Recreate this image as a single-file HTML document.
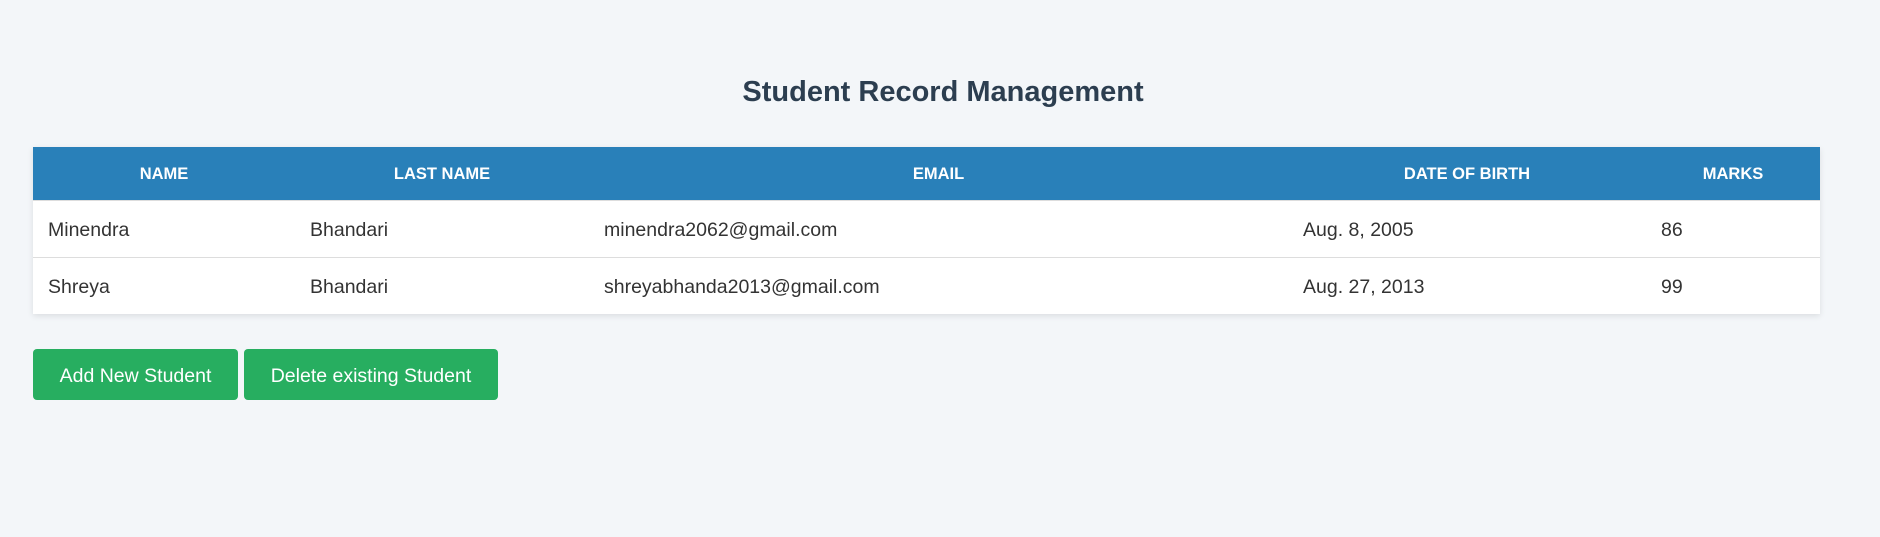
<!DOCTYPE html>
<html><head><meta charset="utf-8"><style>
body{margin:0;background:#f3f6f9;font-family:"Liberation Sans",sans-serif;width:1880px;height:537px;overflow:hidden;color:#333}
h1{position:absolute;top:76px;left:0;width:1886px;margin:0;text-align:center;font-size:29px;color:#2c3e50;font-weight:bold}
table{position:absolute;left:33px;top:147px;width:1787px;border-collapse:collapse;background:#fff;box-shadow:0 2px 6px rgba(0,0,0,.1);font-size:19.5px;table-layout:fixed}
th{background:#2980b9;color:#fff;height:53px;font-size:16.5px;font-weight:bold;text-align:center;padding:3px 0 0;box-sizing:border-box}
td{height:57px;padding:4px 0 0 15px;border-top:1px solid #ddd;color:#333;box-sizing:border-box}
.btn{position:absolute;top:349px;height:51px;padding-top:3px;box-sizing:border-box;background:#27ae60;color:#fff;font-size:19.5px;border-radius:4px;display:flex;align-items:center;justify-content:center}
</style></head><body>
<h1>Student Record Management</h1>
<table>
<colgroup><col style="width:262px"><col style="width:294px"><col style="width:699px"><col style="width:358px"><col style="width:174px"></colgroup>
<tr><th>NAME</th><th>LAST NAME</th><th>EMAIL</th><th>DATE OF BIRTH</th><th>MARKS</th></tr>
<tr><td>Minendra</td><td>Bhandari</td><td>minendra2062@gmail.com</td><td>Aug. 8, 2005</td><td>86</td></tr>
<tr><td>Shreya</td><td>Bhandari</td><td>shreyabhanda2013@gmail.com</td><td>Aug. 27, 2013</td><td>99</td></tr>
</table>
<div class="btn" style="left:33px;width:205px">Add New Student</div>
<div class="btn" style="left:244px;width:254px">Delete existing Student</div>
</body></html>
